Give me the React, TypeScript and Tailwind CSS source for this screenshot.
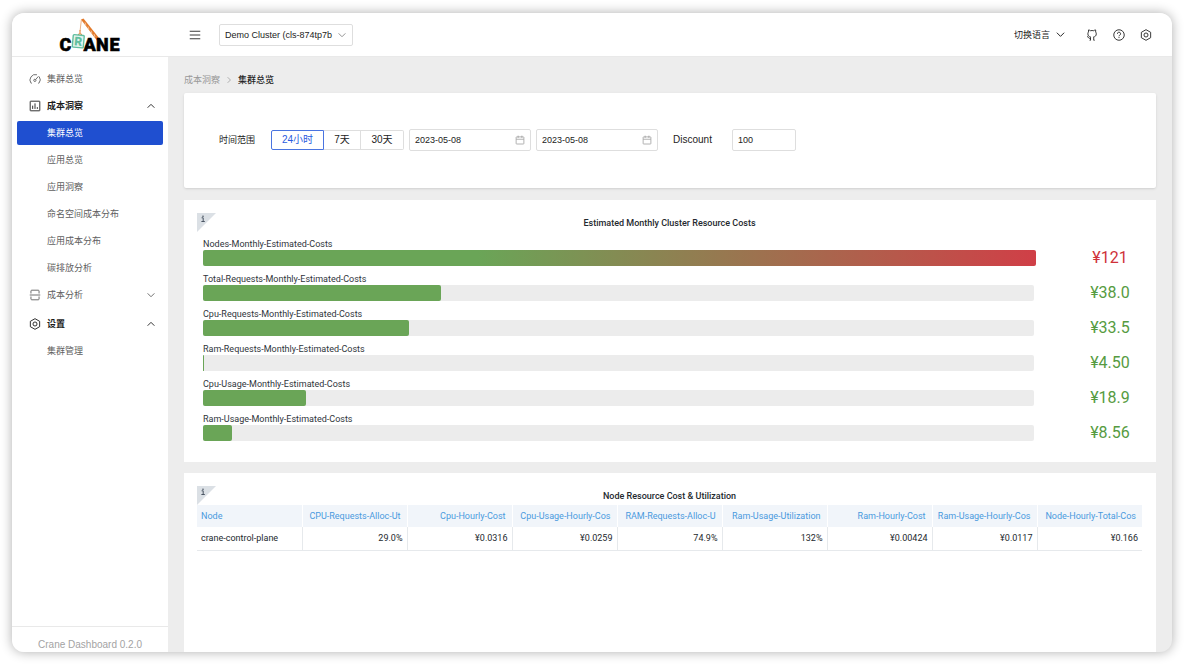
import React from 'react';
import clsx from 'clsx';

interface IconProps {
  className?: string;
}

interface NavEntry {
  label: string;
  active?: boolean;
}

interface NavGroupProps {
  label: string;
  icon: React.ReactNode;
  open: boolean;
  items?: NavEntry[];
}

interface CostRow {
  label: string;
  value: string;
  percent: number;
  high?: boolean;
}

const costRows: CostRow[] = [
  { label: 'Nodes-Monthly-Estimated-Costs', value: '¥121', percent: 100.2, high: true },
  { label: 'Total-Requests-Monthly-Estimated-Costs', value: '¥38.0', percent: 28.7 },
  { label: 'Cpu-Requests-Monthly-Estimated-Costs', value: '¥33.5', percent: 24.8 },
  { label: 'Ram-Requests-Monthly-Estimated-Costs', value: '¥4.50', percent: 0.1 },
  { label: 'Cpu-Usage-Monthly-Estimated-Costs', value: '¥18.9', percent: 12.4 },
  { label: 'Ram-Usage-Monthly-Estimated-Costs', value: '¥8.56', percent: 3.5 },
];

const nodeColumns = [
  { title: 'Node', value: 'crane-control-plane' },
  { title: 'CPU-Requests-Alloc-Ut', value: '29.0%' },
  { title: 'Cpu-Hourly-Cost', value: '¥0.0316' },
  { title: 'Cpu-Usage-Hourly-Cos', value: '¥0.0259' },
  { title: 'RAM-Requests-Alloc-U', value: '74.9%' },
  { title: 'Ram-Usage-Utilization', value: '132%' },
  { title: 'Ram-Hourly-Cost', value: '¥0.00424' },
  { title: 'Ram-Usage-Hourly-Cos', value: '¥0.0117' },
  { title: 'Node-Hourly-Total-Cos', value: '¥0.166' },
];

const insightItems: NavEntry[] = [
  { label: '集群总览', active: true },
  { label: '应用总览' },
  { label: '应用洞察' },
  { label: '命名空间成本分布' },
  { label: '应用成本分布' },
  { label: '碳排放分析' },
];

const Svg: React.FC<IconProps & { children: React.ReactNode }> = ({ className, children }) => (
  <svg viewBox="0 0 16 16" fill="none" stroke="currentColor" strokeWidth="1.2" className={className} aria-hidden="true">
    {children}
  </svg>
);

const ChevronIcon: React.FC<IconProps & { direction: 'up' | 'down' | 'right' }> = ({ className, direction }) => (
  <Svg className={className}>
    {direction === 'up' && <path d="M3.5 10.3 8 5.8l4.5 4.5" />}
    {direction === 'down' && <path d="M3.5 5.8 8 10.3l4.5-4.5" />}
    {direction === 'right' && <path d="M5.8 3.5l4.5 4.5-4.5 4.500" />}
  </Svg>
);

const DashboardIcon: React.FC<IconProps> = ({ className }) => (
  <Svg className={className}>
    <path d="M3.6 13.6H2.700A7.300 7.300 0 0 1 10.600 2.300M13.600 4.800a7.300 7.300 0 0 1-.3 8.800h-.9" />
    <circle cx="7.800" cy="9.800" r="1.500" />
    <path d="M8.900 8.700 12.600 4.400" />
  </Svg>
);

const ChartIcon: React.FC<IconProps> = ({ className }) => (
  <Svg className={className}>
    <rect x="1.6" y="1.6" width="12.8" height="12.8" rx="0.6" />
    <path d="M4.9 7.5v4.4M8 4.5v7.4M11.1 9.5v2.4" />
  </Svg>
);

const SplitIcon: React.FC<IconProps> = ({ className }) => (
  <Svg className={className}>
    <path d="M2.6 6V2.6c0-.6.4-1 1-1h8.8c.6 0 1 .4 1 1V6M2.6 10v3.4c0 .6.4 1 1 1h8.8c.6 0 1-.4 1-1V10M1 8h14" />
  </Svg>
);

const SettingIcon: React.FC<IconProps> = ({ className }) => (
  <Svg className={className}>
    <path d="M8 .9 14.2 4.4v7.2L8 15.1 1.8 11.6V4.4z" strokeLinejoin="round" />
    <circle cx="8" cy="8" r="2.7" />
  </Svg>
);

const HelpIcon: React.FC<IconProps> = ({ className }) => (
  <Svg className={className}>
    <circle cx="8" cy="8" r="7" />
    <path d="M5.9 6.4a2.1 2.1 0 1 1 3.1 1.8c-.7.4-1 .8-1 1.5M8 10.8v1.3" />
  </Svg>
);

const GithubIcon: React.FC<IconProps> = ({ className }) => (
  <Svg className={className}>
    <path
      d="M1.5 9.9c.9.2 1.300.8 1.700 1.500.500.900 1.300 1.400 2.800 1.100M6 15v-3.100c0-.5.1-.8.4-1.200C4.200 10.400 2.500 9.200 2.500 6.400c0-.9.3-1.800.9-2.500-.3-.8-.3-1.700.1-2.700.9.1 1.800.6 2.500 1.100a8.500 8.500 0 0 1 4.200 0c.7-.5 1.600-1 2.500-1.100.4 1 .4 1.900.1 2.700.6.7.9 1.600.9 2.500 0 2.800-1.700 4-3.900 4.300.3.300.5.800.5 1.400V15M4.800 15H6M10.300 15h1.200"
      strokeLinejoin="round"
    />
  </Svg>
);

const CalendarIcon: React.FC<IconProps> = ({ className }) => (
  <Svg className={className}>
    <rect x="1.8" y="3" width="12.4" height="11.4" rx="0.8" />
    <path d="M2 6.8h12M5 1v3.6M11 1v3.6" />
  </Svg>
);

const CraneLogo: React.FC = () => (
  <svg viewBox="0 0 62 34" className="h-[34px] w-[62px] overflow-visible" role="img" aria-label="Crane">
    <path d="M22 1.5 24.5.5 44 25l-3.5 1z" fill="#e37a2b" />
    <path d="M26 4.500l1 3M29 8.500l1 3M32 12.500l1 3M35 16l1 3" stroke="#f8dcc6" strokeWidth="0.700" />
    <path d="M22.4 1.5 21 13.500" stroke="#e9a878" strokeWidth="0.9" fill="none" />
    <path d="M21 12v2.500l-1.800 2.500h3.600L21 14.500" stroke="#e37a2b" strokeWidth="0.900" fill="none" />
    <rect x="13.800" y="17" width="11" height="12.500" rx="1" fill="#e3f4ee" stroke="#62bfa0" strokeWidth="1.4" transform="rotate(5 19 23)" />
    <g fontFamily="Roboto, sans-serif" fontWeight="900" fontSize="18" fill="#000" stroke="#000" strokeWidth="0.5">
      <text x="0.5" y="33">C</text>
      <text x="24.5" y="32.5">A</text>
      <text x="37" y="32.5">N</text>
      <text x="50.5" y="32.5">E</text>
    </g>
    <text x="15.500" y="27.500" fontFamily="Roboto, sans-serif" fontWeight="900" fontSize="12" fill="#62bfa0" transform="rotate(5 19 23)">
      R
    </text>
  </svg>
);

const NavLink: React.FC<NavEntry> = ({ label, active }) => (
  <a
    href="#"
    className={clsx(
      'flex h-6 items-center rounded-xs pl-[30px]',
      active ? 'bg-[#1f4fd0] text-white' : 'text-[#606060]'
    )}
  >
    {label}
  </a>
);

const NavGroup: React.FC<NavGroupProps> = ({ label, icon, open, items = [] }) => (
  <div className="flex flex-col gap-[3px]">
    <button
      type="button"
      aria-expanded={open}
      className={clsx(
        'flex h-6 items-center gap-1.5 pr-1.5 pl-3',
        open ? 'font-bold text-[#1c1c1c]' : 'text-[#606060]'
      )}
    >
      {icon}
      <span className="flex-1 text-left">{label}</span>
      <ChevronIcon direction={open ? 'up' : 'down'} className="size-3" />
    </button>
    {items.map((item) => (
      <NavLink key={item.label} {...item} />
    ))}
  </div>
);

const DateField: React.FC<{ label: string; value: string }> = ({ label, value }) => (
  <div className="flex h-[22px] w-[122px] items-center rounded-xs border border-[#dedede] px-[5px]">
    <input aria-label={label} defaultValue={value} className="min-w-0 flex-1 outline-none" />
    <CalendarIcon className="size-[10px] text-[#999999]" />
  </div>
);

const PanelHeader: React.FC<{ title: string }> = ({ title }) => (
  <div className="relative flex h-[19px] items-center justify-center">
    <svg viewBox="0 0 19 19" className="absolute top-0 left-0 size-[19px]" aria-hidden="true">
      <path d="M0 0h19L0 19z" fill="#dbe0e5" />
      <path d="M4.6 4.8h1.600v3.600M4.4 8.500h3.400" stroke="#4b5563" strokeWidth="1" fill="none" />
      <circle cx="6" cy="3.200" r="0.8" fill="#4b5563" />
    </svg>
    <h2 className="font-medium text-[#24292e]">{title}</h2>
  </div>
);

const CostBar: React.FC<CostRow> = ({ label, value, percent, high }) => (
  <div className="flex items-end gap-11">
    <div className="flex-1">
      <div className="h-[11px] leading-[11px] text-[#2f353b]">{label}</div>
      <div className="h-4 rounded-xs bg-[#ececec]">
        <div
          className={clsx(
            'h-4 rounded-xs',
            high ? 'bg-linear-to-r/srgb from-[#6aa557] from-33% to-[#d03f47]' : 'bg-[#6aa557]'
          )}
          style={{ width: `${percent}%` }}
        />
      </div>
    </div>
    <div className={clsx('w-16 text-center text-base leading-4', high ? 'text-[#cf3139]' : 'text-[#569b41]')}>
      {value}
    </div>
  </div>
);

const NodeTable: React.FC = () => (
  <table className="w-full table-fixed border-collapse">
    <thead>
      <tr className="h-[22px] bg-[#f1f5fa]">
        {nodeColumns.map((column, index) => (
          <th
            key={column.title}
            scope="col"
            className={clsx(
              'border-r border-white pr-1.5 pl-1 font-normal whitespace-nowrap text-[#4a9ade] last:border-r-0',
              index === 0 ? 'text-left' : 'text-right'
            )}
          >
            {column.title}
          </th>
        ))}
      </tr>
    </thead>
    <tbody>
      <tr className="h-[23px] border-b border-[#e6e9ec]">
        {nodeColumns.map((column, index) => (
          <td
            key={column.title}
            className={clsx(
              'border-r border-[#e6e9ec] px-1 text-[#24292e] last:border-r-0',
              index === 0 ? 'text-left' : 'text-right'
            )}
          >
            {column.value}
          </td>
        ))}
      </tr>
    </tbody>
  </table>
);

const Header: React.FC = () => (
  <header className="flex h-11 items-center border-b border-[#e9e9e9] bg-white pr-5">
    <div className="flex w-[156px] justify-center">
      <CraneLogo />
    </div>
    <button type="button" aria-label="Toggle menu" className="ml-[21px]">
      <Svg className="size-3 text-[#222222]">
        <path d="M1 3h14M1 8h14M1 13h14" />
      </Svg>
    </button>
    <div className="relative ml-[18px] w-[134px]">
      <select
        aria-label="Cluster"
        className="h-[22px] w-full appearance-none rounded-xs border border-[#dedede] bg-white pl-[5px] text-[#222222]"
      >
        <option>Demo Cluster (cls-874tp7b</option>
      </select>
      <ChevronIcon direction="down" className="pointer-events-none absolute top-[5px] right-[5px] size-3 text-[#888888]" />
    </div>
    <div className="ml-auto flex items-center gap-[15px] text-[#222222]">
      <button type="button" className="mr-1 flex items-center gap-1">
        切换语言
        <ChevronIcon direction="down" className="size-[13px]" />
      </button>
      <button type="button" aria-label="GitHub">
        <GithubIcon className="size-3" />
      </button>
      <button type="button" aria-label="Help">
        <HelpIcon className="size-3" />
      </button>
      <button type="button" aria-label="Settings">
        <SettingIcon className="size-3" />
      </button>
    </div>
  </header>
);

const Sidebar: React.FC = () => (
  <aside className="flex w-[156px] shrink-0 flex-col bg-white">
    <nav className="flex flex-1 flex-col gap-[3px] px-[5px] pt-[10px]">
      <a href="#" className="flex h-6 items-center gap-1.5 pl-3 text-[#606060]">
        <DashboardIcon className="size-3" />
        集群总览
      </a>
      <NavGroup label="成本洞察" icon={<ChartIcon className="size-3" />} open items={insightItems} />
      <NavGroup label="成本分析" icon={<SplitIcon className="size-3" />} open={false} />
      <div className="pt-[2px]">
        <NavGroup label="设置" icon={<SettingIcon className="size-3" />} open items={[{ label: '集群管理' }]} />
      </div>
    </nav>
    <footer className="h-[26px] border-t border-[#e9e9e9] pt-3 text-center text-[10px] leading-3 text-[#a3a3a3]">
      Crane Dashboard 0.2.0
    </footer>
  </aside>
);

const Filters: React.FC = () => (
  <section className="flex items-center rounded-xs bg-white px-[35px] pt-9 pb-[37px] text-[#222222] shadow-sm">
    <span className="w-[52px]">时间范围</span>
    <div className="flex h-5 text-[10px]">
      <button type="button" className="w-[53px] rounded-l-xs border border-[#4a74e0] text-[#2b5be0]">
        24小时
      </button>
      <button type="button" className="w-[37px] border-y border-r border-[#dedede]">
        7天
      </button>
      <button type="button" className="w-[43px] rounded-r-xs border-y border-r border-[#dedede]">
        30天
      </button>
    </div>
    <div className="ml-[5px] flex gap-[5px]">
      <DateField label="Start date" value="2023-05-08" />
      <DateField label="End date" value="2023-05-08" />
    </div>
    <label htmlFor="discount" className="ml-[15px] w-[59px] text-[10px]">
      Discount
    </label>
    <input
      id="discount"
      defaultValue="100"
      className="h-[22px] w-16 rounded-xs border border-[#dedede] px-[5px] outline-none"
    />
  </section>
);

const App: React.FC = () => {
  return (
    <div className="h-screen bg-white p-3 pt-[13px] font-['Liberation_Sans','Noto_Sans_CJK_SC',sans-serif] text-[9px] leading-3">
      <div className="flex h-full flex-col overflow-hidden rounded-xl bg-[#ededed] shadow-[0_0_12px_rgba(0,0,0,0.32)]">
        <Header />
        <div className="flex min-h-0 flex-1">
          <Sidebar />
          <main className="flex min-w-0 flex-1 flex-col px-4">
            <div className="flex h-9 items-center gap-1 pt-[10px] text-[#999999]">
              <a href="#">成本洞察</a>
              <ChevronIcon direction="right" className="size-[10px]" />
              <span className="font-medium text-[#222222]">集群总览</span>
            </div>
            <Filters />
            <section className="mt-3 bg-white pt-[13px] pr-3.5 pb-[21px] pl-[13px] font-[Roboto,sans-serif]">
              <PanelHeader title="Estimated Monthly Cluster Resource Costs" />
              <div className="mt-[7px] flex flex-col gap-2 pl-1.5">
                {costRows.map((row) => (
                  <CostBar key={row.label} {...row} />
                ))}
              </div>
            </section>
            <section className="mt-[11px] flex-1 bg-white pt-[13px] pr-3.5 pl-[13px] font-[Roboto,sans-serif]">
              <PanelHeader title="Node Resource Cost & Utilization" />
              <NodeTable />
            </section>
          </main>
        </div>
      </div>
    </div>
  );
};

export default App;
